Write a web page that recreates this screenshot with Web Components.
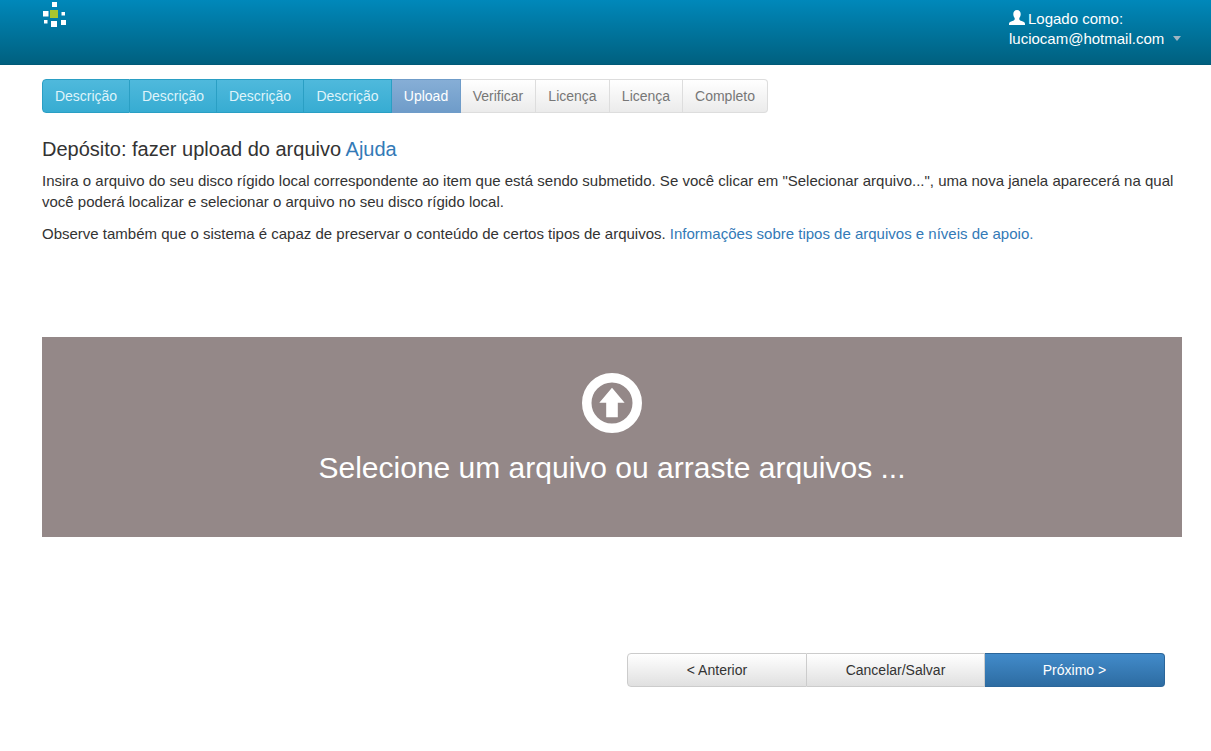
<!DOCTYPE html>
<html lang="pt"><head><meta charset="utf-8"><title>Depósito</title>
<style>
html,body{margin:0;padding:0;background:#fff}
body{font:14px/20px "Liberation Sans",Arial,sans-serif;color:#333}
</style></head><body>
<app-header email="luciocam@hotmail.com"></app-header>
<page-main>
  <step-bar>
    <step-item state="done">Descrição</step-item>
    <step-item state="done">Descrição</step-item>
    <step-item state="done">Descrição</step-item>
    <step-item state="done">Descrição</step-item>
    <step-item state="active">Upload</step-item>
    <step-item>Verificar</step-item>
    <step-item>Licença</step-item>
    <step-item>Licença</step-item>
    <step-item>Completo</step-item>
  </step-bar>
  <upload-intro></upload-intro>
  <drop-zone></drop-zone>
  <nav-buttons></nav-buttons>
</page-main>
<script>
function def(name, html, setup){
  customElements.define(name, class extends HTMLElement{
    constructor(){super();this.attachShadow({mode:'open'}).innerHTML=html;}
    connectedCallback(){ if(setup) setup(this); }
  });
}
def('app-header',`<style>
:host{display:flex;justify-content:space-between;height:64px;padding:0 27px 0 42px;border-bottom:1px solid #005a78;box-sizing:content-box;
 background:linear-gradient(#0088ba,#00607f);color:#fff}
svg.logo{display:block;margin-top:1px}
.user{width:175px;padding-top:9px;font-size:15px;line-height:20px;white-space:nowrap}
.u{display:inline-block;vertical-align:-1px;margin-right:3px;height:15px}
.caret{display:inline-block;width:0;height:0;border:4px solid transparent;border-top:5px solid #9fb5c2;border-bottom:0;margin-left:9px;vertical-align:3px}
</style>
<svg class="logo" width="26" height="27" viewBox="0 0 26 27" fill="#fff">
<rect x="10" y="1" width="5" height="5"/><rect x="1" y="10" width="5.5" height="5.5"/>
<rect x="8" y="9" width="8" height="8" fill="#a9c52f"/><rect x="19.5" y="11" width="3.5" height="3.5"/>
<rect x="2" y="19" width="3.5" height="3.5"/><rect x="9" y="20" width="6" height="6"/><rect x="19" y="19" width="5" height="5"/>
</svg>
<div class="user"><svg class="u" width="16" height="15" viewBox="0 0 16 15" fill="#fff"><path d="M8 0c2.400 0 3.700 1.700 3.700 4 0 1.600-.6 3-1.400 4v1.200c0 .9 1 1.300 2.300 1.800 1.800.7 3.400 1.300 3.400 2.800V15H0v-1.200c0-1.500 1.600-2.100 3.400-2.800 1.300-.5 2.300-.9 2.300-1.800V8C4.900 7 4.300 5.600 4.300 4 4.300 1.700 5.600 0 8 0z"/></svg>Logado como:<br><span id="e"></span><i class="caret"></i></div>`,
 el=>{el.shadowRoot.getElementById('e').textContent=el.getAttribute('email');});
def('page-main',`<style>:host{display:block;padding:14px 29px 0 42px}</style><slot></slot>`);
def('step-bar',`<style>:host{display:grid;grid-template-columns:88px 87px 87px 88px 69px 75px 74px 73px 85px;width:max-content}</style><slot></slot>`);
def('step-item',`<style>
:host{display:block;text-align:center;padding:6px 0;height:34px;box-sizing:border-box;border:1px solid #ddd;border-left:0;color:#777;font-size:14px;
 background:linear-gradient(#fff,#ebebeb)}
:host([state=done]){border-color:#2a9fc4;color:#dff3fa;background:linear-gradient(#4fb9dc,#37acd2)}
:host([state=active]){background:linear-gradient(#86aed6,#6f9cc9);border-color:#6f9cc9;color:#fff}
:host(:first-child){border-left:1px solid #2a9fc4;border-radius:4px 0 0 4px}
:host(:last-child){border-radius:0 4px 4px 0}
</style><slot></slot>`);
def('upload-intro',`<style>
:host{display:block;margin-top:24px}
h2{font:20px/24px "Liberation Sans",Arial,sans-serif;color:#333;margin:0 0 9px}
a{color:#337ab7;text-decoration:none}
p{margin:0 0 10px;color:#333;font-size:15px;line-height:1.42857}
</style>
<h2>Depósito: fazer upload do arquivo <a href="#">Ajuda</a></h2>
<p>Insira o arquivo do seu disco rígido local correspondente ao item que está sendo submetido. Se você clicar em "Selecionar arquivo...", uma nova janela aparecerá na qual você poderá localizar e selecionar o arquivo no seu disco rígido local.</p>
<p>Observe também que o sistema é capaz de preservar o conteúdo de certos tipos de arquivos. <a href="#">Informações sobre tipos de arquivos e níveis de apoio.</a></p>`);
def('drop-zone',`<style>
:host{display:flex;flex-direction:column;align-items:center;height:200px;margin-top:93px;background:#948888;color:#fff;box-sizing:border-box;padding-top:36px}
svg{display:block}
div{font-size:30px;line-height:36px;margin-top:16px}
</style>
<svg width="61" height="61" viewBox="0 0 61 61"><circle cx="30" cy="30" r="25.250" fill="none" stroke="#fff" stroke-width="9.500"/><path fill="#fff" d="M30 14.700 L42.600 29.700 H35.800 V44.300 H24.200 V29.700 H17.300 Z"/></svg>
<div>Selecione um arquivo ou arraste arquivos ...</div>`);
def('nav-buttons',`<style>
:host{display:grid;grid-template-columns:180px 178px 180px;margin:116px 17px 0 auto;width:538px;height:34px}
button{font:14px "Liberation Sans",Arial,sans-serif;color:#333;border:1px solid #ccc;border-left:0;background:linear-gradient(#fff,#e0e0e0);padding:0}
button:first-of-type{border-left:1px solid #ccc;border-radius:4px 0 0 4px}
button:last-of-type{background:linear-gradient(#428bca,#2d6ca2);border-color:#2b669a;color:#fff;border-radius:0 4px 4px 0}
</style><button>&lt; Anterior</button><button>Cancelar/Salvar</button><button>Próximo &gt;</button>`);
</script>
</body></html>
